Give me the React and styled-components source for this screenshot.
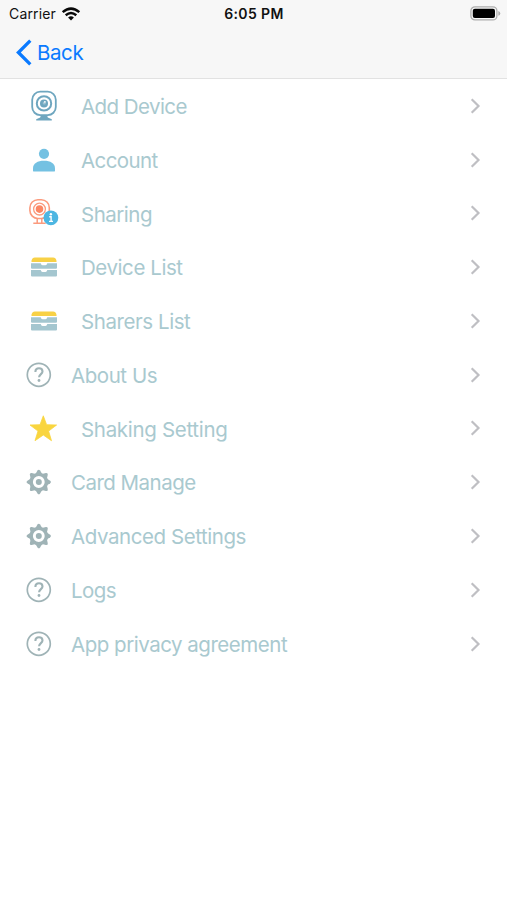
import React from "react";
import styled, { createGlobalStyle } from "styled-components";

const GlobalStyle = createGlobalStyle`
  * {
    box-sizing: border-box;
  }
  body {
    margin: 0;
    background: #fff;
    font-family: Inter, "Liberation Sans", sans-serif;
  }
`;

const CameraIcon = () => (
  <svg width="30" height="32" viewBox="0 0 30 32" fill="none" stroke="#6ea6bf">
    <rect x="3.2" y="1.7" width="23.6" height="23.4" rx="8" strokeWidth="1.8" />
    <circle cx="15" cy="13.4" r="7.2" strokeWidth="2" />
    <circle cx="15" cy="13.4" r="4" fill="#6ea6bf" stroke="none" />
    <circle cx="15.3" cy="13" r="1.6" fill="#9fc4d4" stroke="none" />
    <circle cx="15.9" cy="11.8" r="0.9" fill="#fff" stroke="none" />
    <path d="M12 25h6l.8 2.6 4 1.6v1.3H7.2v-1.3l4-1.6z" fill="#6ea6bf" stroke="none" />
  </svg>
);

const UserIcon = () => (
  <svg width="30" height="32" viewBox="0 0 30 32" fill="#74c1e2">
    <circle cx="15" cy="9.8" r="5.1" />
    <path d="M4 27v-2.6c0-5 4.6-7.6 11-7.6s11 2.6 11 7.6V27q0 .4-.6.4H4.6Q4 27.4 4 27z" />
  </svg>
);

const SharingIcon = () => (
  <svg width="30" height="32" viewBox="0 0 30 32" fill="none" stroke="#fb9a7d">
    <rect x="0.9" y="2.7" width="19.4" height="18.8" rx="8" strokeWidth="1.6" />
    <circle cx="10.5" cy="12.1" r="5.9" strokeWidth="1.3" />
    <circle cx="10.5" cy="12.1" r="3.8" fill="#fb8765" stroke="none" />
    <path d="M8.2 21.5v4.2M12.8 21.5v4.2M4.3 26.3h12.4" strokeWidth="1.5" />
    <circle cx="21.9" cy="20.8" r="7.4" fill="#4db6e2" stroke="none" />
    <circle cx="21.9" cy="17.2" r="1.2" fill="#fff" stroke="none" />
    <path d="M20.2 19.8h1.9v4.3M20 24.4h4" stroke="#fff" strokeWidth="1.4" />
  </svg>
);

const DrawerIcon = () => (
  <svg width="30" height="32" viewBox="0 0 30 32" fill="#a4c6cf">
    <path d="M2.5 11v-1.3Q3.3 6.6 5.8 6.6h18.4q2.5 0 3.3 3.1V11z" fill="#f8d146" />
    <path d="M2 12.2h9.7q.5 2 1.8 2h3q1.3 0 1.8-2H28v4.6q0 1-1 1H3q-1 0-1-1z" />
    <path d="M2 19h9.7q.5 2 1.8 2h3q1.3 0 1.8-2H28v5.6q0 1-1 1H3q-1 0-1-1z" />
  </svg>
);

const StarIcon = () => (
  <svg width="30" height="32" viewBox="0 0 30 32" fill="#f9d53f">
    <path
      d="M14.3 3.8l3.3 8.9 10 .3-8 6.1 2.9 9.6-8.2-5.7-8.3 5.7 3-9.6-8-6.1 10-.3z"
      stroke="#f9d53f"
      strokeWidth="0.8"
      strokeLinejoin="round"
    />
  </svg>
);

const HelpIcon = () => (
  <svg width="26" height="26" viewBox="0 0 26 26" fill="none" stroke="#9fb3b6">
    <circle cx="12.8" cy="12.8" r="11.5" strokeWidth="1.7" />
    <path
      d="M9.4 9.9c0-2.3 1.5-3.6 3.6-3.6s3.5 1.3 3.5 3.2c0 2.5-3.4 2.8-3.4 5.8"
      strokeWidth="2.1"
    />
    <circle cx="13" cy="18.5" r="1.4" fill="#9fb3b6" stroke="none" />
  </svg>
);

const GearIcon = () => (
  <svg width="26" height="26" viewBox="0 0 26 26" fill="#9fb3b6">
    {[0, 45, 90, 135, 180, 225, 270, 315].map((angle) => (
      <path key={angle} d="M9.3 5.2L11.5 1.6q1.3-1.7 2.6 0l2.2 3.6z" transform={`rotate(${angle} 12.8 13)`} />
    ))}
    <circle cx="12.8" cy="13" r="7.6" fill="none" stroke="#9fb3b6" strokeWidth="3.4" />
    <circle cx="12.8" cy="13" r="3" />
  </svg>
);

const items = [
  { label: "Add Device", icon: CameraIcon, spacing: -0.57 },
  { label: "Account", icon: UserIcon, spacing: -0.6 },
  { label: "Sharing", icon: SharingIcon, spacing: -0.5 },
  { label: "Device List", icon: DrawerIcon, spacing: -0.43 },
  { label: "Sharers List", icon: DrawerIcon, spacing: -0.43 },
  { label: "About Us", icon: HelpIcon, spacing: -0.45, small: true },
  { label: "Shaking Setting", icon: StarIcon, spacing: -0.31 },
  { label: "Card Manage", icon: GearIcon, spacing: -0.52, small: true },
  { label: "Advanced Settings", icon: GearIcon, spacing: -0.43, small: true },
  { label: "Logs", icon: HelpIcon, spacing: -0.6, small: true },
  { label: "App privacy agreement", icon: HelpIcon, spacing: -0.48, small: true },
];

const App = () => {
  return (
    <>
      <GlobalStyle />
      <Screen>
        <Header>
          <StatusBar>
            <Carrier>
              Carrier
              <svg width="20" height="14" viewBox="0 0 20 14" fill="none" stroke="#080808" strokeWidth="2.5">
                <path d="M1.7 5.1q8.3-7 16.6 0" />
                <path d="M4.7 8.2q5.3-4.4 10.6 0" />
                <path d="M10 13.5l-2.9-3q2.9-2.4 5.8 0z" fill="#080808" stroke="none" />
              </svg>
            </Carrier>
            <Time>6:05 PM</Time>
            <Battery>
              <svg width="31" height="15" viewBox="0 0 31 15">
                <rect x="0.9" y="0.9" width="26" height="13" rx="4" fill="#f8f8f8" stroke="#adadad" strokeWidth="1.3" />
                <rect x="2.8" y="2.7" width="22.2" height="9.4" rx="2" fill="#000" />
                <path d="M28.3 5q2 .7 2 2.4t-2 2.4z" fill="#adadad" />
              </svg>
            </Battery>
          </StatusBar>
          <BackButton>
            <svg width="17" height="27" viewBox="0 0 17 27" fill="none" stroke="#0a7aff" strokeWidth="3.3">
              <path d="M15.3 1.6L3.4 13.5l11.9 11.9" />
            </svg>
            Back
          </BackButton>
        </Header>
        <Menu>
          {items.map(({ label, icon: Icon, spacing, small }) => (
            <Row key={label}>
              <IconBox $small={small}>
                <Icon />
              </IconBox>
              <Label $spacing={spacing}>{label}</Label>
              <svg width="11" height="16" viewBox="0 0 11 16" fill="none" stroke="#bfbfc3" strokeWidth="2.2">
                <path d="M1.7 1.2L8.5 8l-6.8 6.8" />
              </svg>
            </Row>
          ))}
        </Menu>
      </Screen>
    </>
  );
};

const Screen = styled.div`
  width: 100%;
  height: 900px;
  background: #fff;
  overflow: hidden;
`;

const Header = styled.header`
  height: 79px;
  background: #f7f7f7;
  border-bottom: 1px solid #e2e2e2;
`;

const StatusBar = styled.div`
  display: grid;
  grid-template-columns: 1fr auto 1fr;
  align-items: center;
  height: 27px;
  padding: 0 6px 0 9px;
  color: #111;
`;

const Carrier = styled.div`
  display: flex;
  align-items: center;
  gap: 5px;
  font-size: 14px;
  letter-spacing: 0.15px;
`;

const Time = styled.div`
  padding-right: 2px;
  font-size: 14px;
  font-weight: 600;
  letter-spacing: 0.4px;
`;

const Battery = styled.div`
  display: flex;
  justify-content: flex-end;
`;

const BackButton = styled.button`
  display: flex;
  align-items: center;
  gap: 5px;
  height: 51px;
  padding: 0 0 0 15px;
  border: none;
  background: none;
  color: #0a7aff;
  font-family: inherit;
  font-size: 20.5px;
  letter-spacing: -0.4px;
`;

const Menu = styled.main`
  display: flex;
  flex-direction: column;
`;

const Row = styled.div`
  display: flex;
  align-items: center;
  height: 53.78px;
  padding-right: 26px;
`;

const IconBox = styled.div`
  display: flex;
  flex: none;
  width: ${({ $small }) => ($small ? "71px" : "81px")};
  padding-left: ${({ $small }) => ($small ? "26px" : "29px")};
`;

const Label = styled.span`
  flex: 1;
  padding-top: 1.4px;
  color: #a9c9cf;
  font-size: 20.5px;
  letter-spacing: ${({ $spacing }) => $spacing}px;
`;

export default App;
